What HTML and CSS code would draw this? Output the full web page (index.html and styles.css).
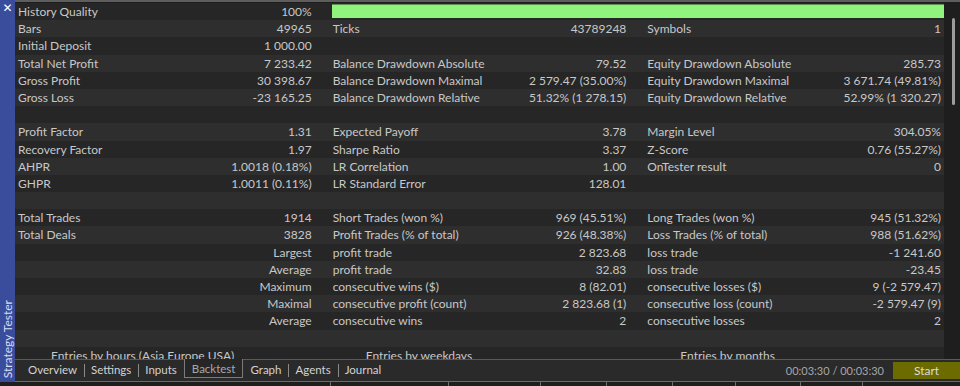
FILE: index.html
```html
<!DOCTYPE html>
<html lang="en">
<head>
    <meta charset="UTF-8">
    <meta name="viewport" content="width=device-width, initial-scale=1.0">
    <title>Strategy Tester</title>
    <link rel="stylesheet" href="styles.css">
</head>
<body>
    <div class="window">
        <aside class="sidebar">
            <span class="close">✕</span>
            <span class="side-title">Strategy Tester</span>
        </aside>

        <div class="main">
            <div class="report-wrap">
                <div class="report">
                    <div class="row">
                        <div class="cell"><span>History Quality</span><span>100%</span></div>
                        <div class="quality-bar"></div>
                    </div>
                    <div class="row">
                        <div class="cell"><span>Bars</span><span>49965</span></div>
                        <div class="cell"><span>Ticks</span><span>43789248</span></div>
                        <div class="cell"><span>Symbols</span><span>1</span></div>
                    </div>
                    <div class="row">
                        <div class="cell"><span>Initial Deposit</span><span>1 000.00</span></div>
                    </div>
                    <div class="row">
                        <div class="cell"><span>Total Net Profit</span><span>7 233.42</span></div>
                        <div class="cell"><span>Balance Drawdown Absolute</span><span>79.52</span></div>
                        <div class="cell"><span>Equity Drawdown Absolute</span><span>285.73</span></div>
                    </div>
                    <div class="row">
                        <div class="cell"><span>Gross Profit</span><span>30 398.67</span></div>
                        <div class="cell"><span>Balance Drawdown Maximal</span><span>2 579.47 (35.00%)</span></div>
                        <div class="cell"><span>Equity Drawdown Maximal</span><span>3 671.74 (49.81%)</span></div>
                    </div>
                    <div class="row">
                        <div class="cell"><span>Gross Loss</span><span>-23 165.25</span></div>
                        <div class="cell"><span>Balance Drawdown Relative</span><span>51.32% (1 278.15)</span></div>
                        <div class="cell"><span>Equity Drawdown Relative</span><span>52.99% (1 320.27)</span></div>
                    </div>
                    <div class="row"></div>
                    <div class="row">
                        <div class="cell"><span>Profit Factor</span><span>1.31</span></div>
                        <div class="cell"><span>Expected Payoff</span><span>3.78</span></div>
                        <div class="cell"><span>Margin Level</span><span>304.05%</span></div>
                    </div>
                    <div class="row">
                        <div class="cell"><span>Recovery Factor</span><span>1.97</span></div>
                        <div class="cell"><span>Sharpe Ratio</span><span>3.37</span></div>
                        <div class="cell"><span>Z-Score</span><span>0.76 (55.27%)</span></div>
                    </div>
                    <div class="row">
                        <div class="cell"><span>AHPR</span><span>1.0018 (0.18%)</span></div>
                        <div class="cell"><span>LR Correlation</span><span>1.00</span></div>
                        <div class="cell"><span>OnTester result</span><span>0</span></div>
                    </div>
                    <div class="row">
                        <div class="cell"><span>GHPR</span><span>1.0011 (0.11%)</span></div>
                        <div class="cell"><span>LR Standard Error</span><span>128.01</span></div>
                    </div>
                    <div class="row"></div>
                    <div class="row">
                        <div class="cell"><span>Total Trades</span><span>1914</span></div>
                        <div class="cell"><span>Short Trades (won %)</span><span>969 (45.51%)</span></div>
                        <div class="cell"><span>Long Trades (won %)</span><span>945 (51.32%)</span></div>
                    </div>
                    <div class="row">
                        <div class="cell"><span>Total Deals</span><span>3828</span></div>
                        <div class="cell"><span>Profit Trades (% of total)</span><span>926 (48.38%)</span></div>
                        <div class="cell"><span>Loss Trades (% of total)</span><span>988 (51.62%)</span></div>
                    </div>
                    <div class="row">
                        <div class="cell"><span></span><span>Largest</span></div>
                        <div class="cell"><span>profit trade</span><span>2 823.68</span></div>
                        <div class="cell"><span>loss trade</span><span>-1 241.60</span></div>
                    </div>
                    <div class="row">
                        <div class="cell"><span></span><span>Average</span></div>
                        <div class="cell"><span>profit trade</span><span>32.83</span></div>
                        <div class="cell"><span>loss trade</span><span>-23.45</span></div>
                    </div>
                    <div class="row">
                        <div class="cell"><span></span><span>Maximum</span></div>
                        <div class="cell"><span>consecutive wins ($)</span><span>8 (82.01)</span></div>
                        <div class="cell"><span>consecutive losses ($)</span><span>9 (-2 579.47)</span></div>
                    </div>
                    <div class="row">
                        <div class="cell"><span></span><span>Maximal</span></div>
                        <div class="cell"><span>consecutive profit (count)</span><span>2 823.68 (1)</span></div>
                        <div class="cell"><span>consecutive loss (count)</span><span>-2 579.47 (9)</span></div>
                    </div>
                    <div class="row">
                        <div class="cell"><span></span><span>Average</span></div>
                        <div class="cell"><span>consecutive wins</span><span>2</span></div>
                        <div class="cell"><span>consecutive losses</span><span>2</span></div>
                    </div>
                    <div class="row"></div>
                    <div class="row">
                        <div class="heading">Entries by hours (Asia Europe USA)</div>
                        <div class="heading">Entries by weekdays</div>
                        <div class="heading">Entries by months</div>
                    </div>
                </div>
                <div class="scrollbar"><div class="thumb"></div></div>
            </div>

            <div class="tabbar">
                <div class="tabs">
                    <span class="tab">Overview</span>
                    <span class="tab">Settings</span>
                    <span class="tab">Inputs</span>
                    <span class="tab active">Backtest</span>
                    <span class="tab">Graph</span>
                    <span class="tab">Agents</span>
                    <span class="tab">Journal</span>
                </div>
                <span class="timer">00:03:30 / 00:03:30</span>
                <button class="start">Start</button>
            </div>

            <div class="statusbar">
                <span style="width: 315px"></span>
                <span style="width: 117px"></span>
                <span style="width: 91px"></span>
                <span style="width: 65px"></span>
                <span style="width: 65px"></span>
                <span style="width: 62px"></span>
                <span style="width: 64px"></span>
                <span style="width: 61px"></span>
            </div>
        </div>
    </div>
</body>
</html>
```

FILE: styles.css
```css
body {
    margin: 0;
    background-color: #1e1e1e;
    font-family: Lato, "Noto Sans", sans-serif;
    font-size: 12px;
    color: #c8c8c8;
    overflow: hidden;
}

.window {
    display: flex;
    height: 386px;
}

/* левая синяя панель */
.sidebar {
    width: 15px;
    height: 382px;
    background-color: #3a4d9c;
    display: flex;
    flex-direction: column;
    justify-content: space-between;
    align-items: center;
    flex-shrink: 0;
}

.close {
    color: #ffffff;
    font-family: "DejaVu Sans", sans-serif;
    font-size: 12px;
    font-weight: bold;
    line-height: 14px;
    margin-top: 1px;
}

.side-title {
    writing-mode: vertical-rl;
    transform: rotate(180deg);
    color: #d8dcef;
    font-size: 12px;
    line-height: 15px;
    margin-bottom: 4px;
}

.main {
    flex: 1;
    display: flex;
    flex-direction: column;
    min-width: 0;
}

.report-wrap {
    display: flex;
    height: 356px;
    border-top: 2px solid #5e5e5e;
    padding-top: 1px;
    overflow: hidden;
}

.report {
    flex: 1;
    overflow: hidden;
}

.row {
    display: grid;
    grid-template-columns: 1fr 1fr 1fr;
    column-gap: 21px;
    padding: 0 3px;
    height: 17.2px;
    line-height: 17.2px;
    background-color: #262626;
}

.row:nth-child(even) {
    background-color: #2e2e2e;
}

.cell {
    display: flex;
    justify-content: space-between;
    white-space: nowrap;
}

.quality-bar {
    grid-column: 2 / 4;
    margin: 1px -3px 2px -1px;
    background-color: #8ff47c;
    border-top: 1px solid #5d8f52;
}

.heading {
    padding-left: 33px;
    white-space: nowrap;
}

.scrollbar {
    width: 16px;
    background-color: #1e1e1e;
    flex-shrink: 0;
}

.thumb {
    width: 3px;
    height: 87px;
    margin: 15px 0 0 8px;
    background-color: #9c9c9c;
    border-radius: 2px;
}

/* нижняя панель вкладок */
.tabbar {
    display: flex;
    align-items: stretch;
    height: 21px;
    border-top: 1px solid #5a5a5a;
    border-bottom: 1px solid #6a6a6a;
    background-color: #2a2a2a;
    font-size: 11.5px;
}

.tabs {
    display: flex;
    flex: 1;
    padding-left: 6px;
}

.tab {
    position: relative;
    padding: 0 7px;
    line-height: 19px;
    color: #d2d2d2;
}

.tab + .tab::before {
    content: "";
    position: absolute;
    left: 0;
    top: 4px;
    height: 13px;
    border-left: 1px solid #8a8a8a;
}

.tab.active {
    margin-top: -1px;
    padding: 0 7px;
    background-color: #262626;
    border: 1px solid #7a7a7a;
    border-top: none;
    height: 18px;
    line-height: 19px;
    color: #a8a8a8;
}

.tab.active::before,
.tab.active + .tab::before {
    display: none;
}

.timer {
    align-self: center;
    color: #a6a6a6;
    font-size: 11px;
    margin-right: 9px;
}

.start {
    width: 67px;
    margin: 2px 0 2px 0;
    border: none;
    background-color: #6b6b00;
    color: #dcdcdc;
    font-family: inherit;
    font-size: 12px;
    padding: 0;
}

.statusbar {
    display: flex;
    height: 4px;
}

.statusbar span {
    border-right: 1px solid #6e6e6e;
}
```
